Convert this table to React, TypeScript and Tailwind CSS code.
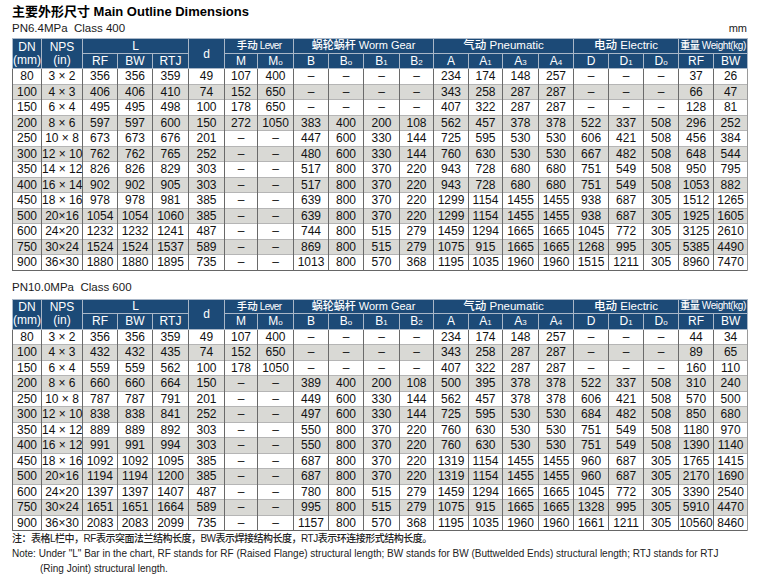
import React from "react";

const T1: string[][] = [
  ["80", "3 × 2", "356", "356", "359", "49", "107", "400", "–", "–", "–", "–", "234", "174", "148", "257", "–", "–", "–", "37", "26"],
  ["100", "4 × 3", "406", "406", "410", "74", "152", "650", "–", "–", "–", "–", "343", "258", "287", "287", "–", "–", "–", "66", "47"],
  ["150", "6 × 4", "495", "495", "498", "100", "178", "650", "–", "–", "–", "–", "407", "322", "287", "287", "–", "–", "–", "128", "81"],
  ["200", "8 × 6", "597", "597", "600", "150", "272", "1050", "383", "400", "200", "108", "562", "457", "378", "378", "522", "337", "508", "296", "252"],
  ["250", "10 × 8", "673", "673", "676", "201", "–", "–", "447", "600", "330", "144", "725", "595", "530", "530", "606", "421", "508", "456", "384"],
  ["300", "12 × 10", "762", "762", "765", "252", "–", "–", "480", "600", "330", "144", "760", "630", "530", "530", "667", "482", "508", "648", "544"],
  ["350", "14 × 12", "826", "826", "829", "303", "–", "–", "517", "800", "370", "220", "943", "728", "680", "680", "751", "549", "508", "950", "795"],
  ["400", "16 × 14", "902", "902", "905", "303", "–", "–", "517", "800", "370", "220", "943", "728", "680", "680", "751", "549", "508", "1053", "882"],
  ["450", "18 × 16", "978", "978", "981", "385", "–", "–", "639", "800", "370", "220", "1299", "1154", "1455", "1455", "938", "687", "305", "1512", "1265"],
  ["500", "20×16", "1054", "1054", "1060", "385", "–", "–", "639", "800", "370", "220", "1299", "1154", "1455", "1455", "938", "687", "305", "1925", "1605"],
  ["600", "24×20", "1232", "1232", "1241", "487", "–", "–", "744", "800", "515", "279", "1459", "1294", "1665", "1665", "1045", "772", "305", "3125", "2610"],
  ["750", "30×24", "1524", "1524", "1537", "589", "–", "–", "869", "800", "515", "279", "1075", "915", "1665", "1665", "1268", "995", "305", "5385", "4490"],
  ["900", "36×30", "1880", "1880", "1895", "735", "–", "–", "1013", "800", "570", "368", "1195", "1035", "1960", "1960", "1515", "1211", "305", "8960", "7470"],
];

const T2: string[][] = [
  ["80", "3 × 2", "356", "356", "359", "49", "107", "400", "–", "–", "–", "–", "234", "174", "148", "257", "–", "–", "–", "44", "34"],
  ["100", "4 × 3", "432", "432", "435", "74", "152", "650", "–", "–", "–", "–", "343", "258", "287", "287", "–", "–", "–", "89", "65"],
  ["150", "6 × 4", "559", "559", "562", "100", "178", "1050", "–", "–", "–", "–", "407", "322", "287", "287", "–", "–", "–", "160", "110"],
  ["200", "8 × 6", "660", "660", "664", "150", "–", "–", "389", "400", "200", "108", "500", "395", "378", "378", "522", "337", "508", "310", "240"],
  ["250", "10 × 8", "787", "787", "791", "201", "–", "–", "449", "600", "330", "144", "562", "457", "378", "378", "606", "421", "508", "570", "500"],
  ["300", "12 × 10", "838", "838", "841", "252", "–", "–", "497", "600", "330", "144", "725", "595", "530", "530", "684", "482", "508", "850", "680"],
  ["350", "14 × 12", "889", "889", "892", "303", "–", "–", "550", "800", "370", "220", "760", "630", "530", "530", "751", "549", "508", "1180", "970"],
  ["400", "16 × 12", "991", "991", "994", "303", "–", "–", "550", "800", "370", "220", "760", "630", "530", "530", "751", "549", "508", "1390", "1140"],
  ["450", "18 × 16", "1092", "1092", "1095", "385", "–", "–", "687", "800", "370", "220", "1319", "1154", "1455", "1455", "960", "687", "305", "1765", "1415"],
  ["500", "20×16", "1194", "1194", "1200", "385", "–", "–", "687", "800", "370", "220", "1319", "1154", "1455", "1455", "960", "687", "305", "2170", "1690"],
  ["600", "24×20", "1397", "1397", "1407", "487", "–", "–", "780", "800", "515", "279", "1459", "1294", "1665", "1665", "1045", "772", "305", "3390", "2540"],
  ["750", "30×24", "1651", "1651", "1664", "589", "–", "–", "995", "800", "515", "279", "1075", "915", "1665", "1665", "1328", "995", "305", "5910", "4470"],
  ["900", "36×30", "2083", "2083", "2099", "735", "–", "–", "1157", "800", "570", "368", "1195", "1035", "1960", "1960", "1661", "1211", "305", "10560", "8460"],
];

const Sub = ({ base, sub }: { base: string; sub: string }) => (
  <>
    {base}
    <span className="text-[8px]">{sub}</span>
  </>
);

const H = "bg-[#1c4a77] text-white border border-[#a9b7c8] p-0 text-center font-normal";

function Cols() {
  return (
    <colgroup>
      <col className="w-[29px]" />
      <col className="w-[41px]" />
      <col className="w-[35px]" />
      <col className="w-[35px]" />
      <col className="w-[36px]" />
      <col className="w-[36px]" />
      <col className="w-[33px]" />
      <col className="w-[36px]" />
      <col className="w-[35px]" />
      <col className="w-[35px]" />
      <col className="w-[36px]" />
      <col className="w-[34px]" />
      <col className="w-[35px]" />
      <col className="w-[34px]" />
      <col className="w-[36px]" />
      <col className="w-[35px]" />
      <col className="w-[35px]" />
      <col className="w-[35px]" />
      <col className="w-[35px]" />
      <col className="w-[35px]" />
      <col className="w-[34px]" />
    </colgroup>
  );
}

function DimTable({ rows }: { rows: string[][] }) {
  return (
    <table className="table-fixed border-collapse w-[735px] text-[12px] leading-none">
      <Cols />
      <thead>
        <tr className="h-[14.5px]">
          <th rowSpan={2} className={H + " leading-[13px]"}>
            DN
            <br />
            (mm)
          </th>
          <th rowSpan={2} className={H + " leading-[13px]"}>
            NPS
            <br />
            (in)
          </th>
          <th colSpan={3} className={H}>L</th>
          <th rowSpan={2} className={H}>d</th>
          <th colSpan={2} className={H + " text-[10px] tracking-[-0.7px]"}>
            <span className="font-medium text-[10.5px] tracking-normal">手动</span> Lever
          </th>
          <th colSpan={4} className={H + " text-[11px]"}>
            <span className="font-medium">蜗轮蜗杆</span> Worm Gear
          </th>
          <th colSpan={4} className={H + " text-[11.5px]"}>
            <span className="font-medium">气动</span> Pneumatic
          </th>
          <th colSpan={3} className={H + " text-[11.5px]"}>
            <span className="font-medium">电动</span> Electric
          </th>
          <th colSpan={2} className={H + " text-[10px] tracking-[-0.4px]"}>
            <span className="font-medium">重量</span> Weight(kg)
          </th>
        </tr>
        <tr className="h-[15.5px]">
          <th className={H}>RF</th>
          <th className={H}>BW</th>
          <th className={H}>RTJ</th>
          <th className={H}>M</th>
          <th className={H}><Sub base="M" sub="o" /></th>
          <th className={H}>B</th>
          <th className={H}><Sub base="B" sub="o" /></th>
          <th className={H}><Sub base="B" sub="1" /></th>
          <th className={H}><Sub base="B" sub="2" /></th>
          <th className={H}>A</th>
          <th className={H}><Sub base="A" sub="1" /></th>
          <th className={H}><Sub base="A" sub="3" /></th>
          <th className={H}><Sub base="A" sub="4" /></th>
          <th className={H}>D</th>
          <th className={H}><Sub base="D" sub="1" /></th>
          <th className={H}><Sub base="D" sub="o" /></th>
          <th className={H}>RF</th>
          <th className={H}>BW</th>
        </tr>
      </thead>
      <tbody>
        {rows.map((r, i) => (
          <tr
            key={i}
            className={
              "h-[15.5px] border-b " +
              (i === rows.length - 1 ? "border-[#666]" : "border-[#b5b5b5]") +
              (i % 2 === 1 ? " bg-[#d9d9d5]" : " bg-white")
            }
          >
            {r.map((c, j) => (
              <td
                key={j}
                className={
                  "p-0 text-center text-[#111] whitespace-nowrap border-r border-[#6a6a6a]" +
                  (j === 0 ? " border-l" : "") +
                  (j === r.length - 1 ? " border-r-[#9a9a9a]" : "")
                }
              >
                {c}
              </td>
            ))}
          </tr>
        ))}
      </tbody>
    </table>
  );
}

export default function App() {
  return (
    <div className="w-[758px] h-[578px] bg-white overflow-hidden px-[12px] pt-[3px] font-['Liberation_Sans','Noto_Sans_CJK_SC',sans-serif] text-[#1a1a1a]">
      <div className="h-[18px] flex items-center text-[13px] font-bold text-black whitespace-nowrap">
        主要外形尺寸 Main Outline Dimensions
      </div>
      <div className="h-[15px] flex items-center justify-between text-[11.5px] whitespace-pre">
        <span>PN6.4MPa  Class 400</span>
        <span className="text-[11px] mr-[-1px]">mm</span>
      </div>
      <div className="h-[2px]" />
      <DimTable rows={T1} />
      <div className="h-[28px] pt-[9px]">
        <div className="h-[16px] flex items-center text-[11.5px] whitespace-pre">PN10.0MPa  Class 600</div>
      </div>
      <DimTable rows={T2} />
      <div className="h-[15px] flex items-center text-[10px] tracking-[-0.5px] font-medium text-[#222] whitespace-nowrap">
        注：表格L栏中，RF表示突面法兰结构长度，BW表示焊接结构长度，RTJ表示环连接形式结构长度。
      </div>
      <div className="h-[15px] flex items-center text-[10px] text-[#222] whitespace-nowrap">
        Note: Under "L" Bar in the chart, RF stands for RF (Raised Flange) structural length; BW stands for BW (Buttwelded Ends) structural length; RTJ stands for RTJ
      </div>
      <div className="h-[15px] flex items-center text-[10px] text-[#222] whitespace-nowrap pl-[28px]">
        (Ring Joint) structural length.
      </div>
    </div>
  );
}
